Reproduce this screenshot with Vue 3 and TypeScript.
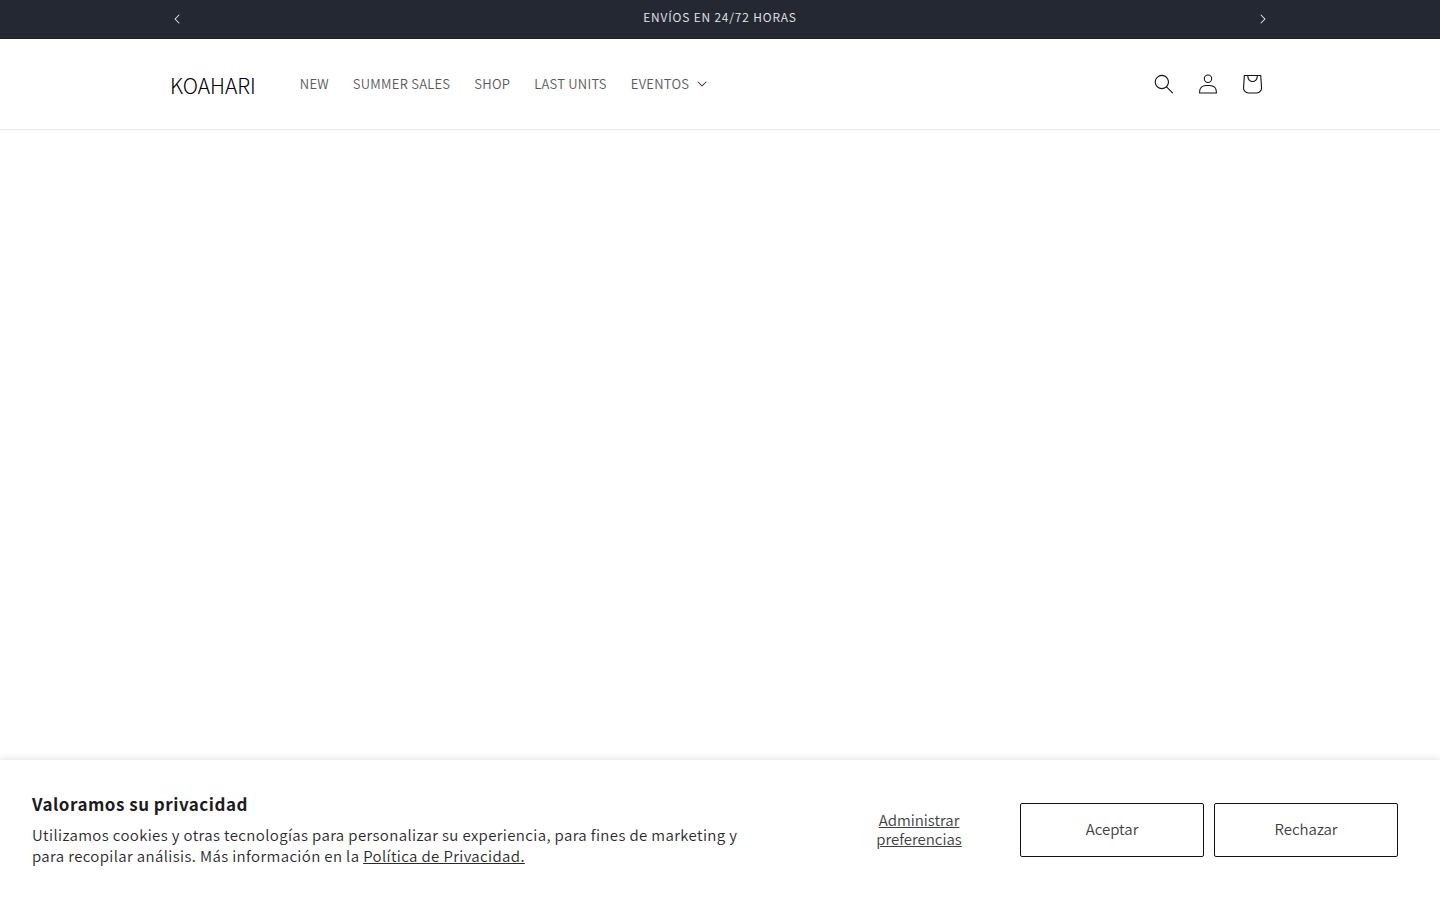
<script setup lang="ts">
import { ref } from 'vue'

interface NavItem {
  label: string
  href: string
}

const navItems: NavItem[] = [
  { label: 'NEW', href: '#new' },
  { label: 'SUMMER SALES', href: '#summer-sales' },
  { label: 'SHOP', href: '#shop' },
  { label: 'LAST UNITS', href: '#last-units' },
]

const showConsent = ref(true)
const eventsOpen = ref(false)
</script>

<template>
  <div class="page">
    <section class="announcement" aria-label="Anuncios">
      <div class="announcement-inner">
        <button class="slide-button" type="button" aria-label="Anuncio anterior">
          <svg class="chevron chevron-left" viewBox="0 0 10 6" aria-hidden="true">
            <path d="M9.354.646a.5.5 0 00-.708 0L5 4.293 1.354.646a.5.5 0 00-.708.708l4 4a.5.5 0 00.708 0l4-4a.5.5 0 000-.708z" />
          </svg>
        </button>
        <p class="announcement-text">ENVÍOS EN 24/72 HORAS</p>
        <button class="slide-button" type="button" aria-label="Anuncio siguiente">
          <svg class="chevron chevron-right" viewBox="0 0 10 6" aria-hidden="true">
            <path d="M9.354.646a.5.5 0 00-.708 0L5 4.293 1.354.646a.5.5 0 00-.708.708l4 4a.5.5 0 00.708 0l4-4a.5.5 0 000-.708z" />
          </svg>
        </button>
      </div>
    </section>

    <header class="header">
      <div class="header-inner">
        <a class="logo" href="#inicio">KOAHARI</a>
        <nav class="nav">
          <a v-for="item in navItems" :key="item.label" class="nav-link" :href="item.href">{{ item.label }}</a>
          <button class="nav-link nav-button" type="button" :aria-expanded="eventsOpen" @click="eventsOpen = !eventsOpen">
            EVENTOS
            <svg class="caret" viewBox="0 0 10 6" aria-hidden="true">
              <path d="M9.354.646a.5.5 0 00-.708 0L5 4.293 1.354.646a.5.5 0 00-.708.708l4 4a.5.5 0 00.708 0l4-4a.5.5 0 000-.708z" />
            </svg>
          </button>
        </nav>
        <div class="actions">
          <button class="icon-button" type="button" aria-label="Búsqueda">
            <svg class="icon" viewBox="0 0 18 19" aria-hidden="true">
              <path fill-rule="evenodd" clip-rule="evenodd" d="M11.03 11.68A5.784 5.784 0 112.85 3.5a5.784 5.784 0 018.18 8.18zm.26 1.12a6.78 6.78 0 11.72-.7l5.4 5.4a.5.5 0 11-.71.7l-5.41-5.4z" />
            </svg>
          </button>
          <a class="icon-button" href="#cuenta" aria-label="Iniciar sesión">
            <svg class="icon" viewBox="0 0 18 19" aria-hidden="true">
              <path fill-rule="evenodd" clip-rule="evenodd" d="M6 4.5a3 3 0 116 0 3 3 0 01-6 0zm3-4a4 4 0 100 8 4 4 0 000-8zm5.58 12.15c1.12.82 1.83 2.24 1.91 4.85H1.51c.08-2.6.79-4.03 1.9-4.85C4.66 11.75 6.5 11.5 9 11.5s4.35.26 5.58 1.15zM9 10.5c-2.5 0-4.65.24-6.17 1.35C1.27 12.98.5 14.93.5 18v.5h17V18c0-3.07-.77-5.02-2.33-6.15-1.52-1.1-3.67-1.35-6.17-1.35z" />
            </svg>
          </a>
          <a class="icon-button" href="#carrito" aria-label="Carrito">
            <svg class="icon-cart" viewBox="0 0 40 40" aria-hidden="true">
              <path fill-rule="evenodd" d="M15.75 11.8h-3.16l-.77 11.6a5 5 0 0 0 4.99 5.34h7.38a5 5 0 0 0 4.99-5.33L28.4 11.8zm0 1h-2.22l-.71 10.67a4 4 0 0 0 3.99 4.27h7.38a4 4 0 0 0 4-4.27l-.72-10.67h-2.22v.63a4.75 4.75 0 1 1-9.5 0zm8.5 0h-7.5v.63a3.75 3.75 0 1 0 7.5 0z" />
            </svg>
          </a>
        </div>
      </div>
    </header>

    <main class="content"></main>

    <section v-if="showConsent" class="consent" aria-labelledby="consent-title">
      <div class="consent-copy">
        <h2 id="consent-title" class="consent-title">Valoramos su privacidad</h2>
        <p class="consent-text">
          Utilizamos cookies y otras tecnologías para personalizar su experiencia, para fines de marketing y para recopilar análisis. Más información en la
          <a class="consent-link" href="#privacidad">Política de Privacidad.</a>
        </p>
      </div>
      <div class="consent-actions">
        <button class="preferences" type="button">Administrar preferencias</button>
        <button class="choice" type="button" @click="showConsent = false">Aceptar</button>
        <button class="choice" type="button" @click="showConsent = false">Rechazar</button>
      </div>
    </section>
  </div>
</template>

<style>
body {
  margin: 0;
  background: #fff;
}
</style>

<style scoped>
.page {
  display: flex;
  flex-direction: column;
  min-height: 100vh;
  font-family: "Noto Sans CJK SC", "Open Sans", sans-serif;
  font-weight: 350;
  color: #121212;
}

.page * {
  box-sizing: border-box;
}

button {
  margin: 0;
  padding: 0;
  border: 0;
  background: none;
  color: inherit;
  font: inherit;
  cursor: pointer;
}

a {
  color: inherit;
  text-decoration: none;
}

.announcement {
  background: #242833;
  border-bottom: 1px solid #20222c;
  color: #e9e9eb;
}

.announcement-inner,
.header-inner {
  display: flex;
  align-items: center;
  max-width: 1200px;
  margin: 0 auto;
  padding: 0 50px;
}

.announcement-inner {
  height: 38px;
  padding: 0 35px;
}

.announcement-text {
  flex: 1;
  margin: 0;
  padding-bottom: 4px;
  font-size: 12px;
  line-height: 20px;
  letter-spacing: 0.07em;
  text-align: center;
}

.slide-button {
  display: flex;
  align-items: center;
  justify-content: center;
  width: 44px;
  height: 38px;
}

.chevron {
  width: 10px;
  height: 6px;
  fill: #e9e9eb;
}

.chevron-left {
  transform: rotate(90deg);
}

.chevron-right {
  transform: rotate(-90deg);
}

.header {
  border-bottom: 1px solid #ebebeb;
}

.header-inner {
  height: 90px;
}

.logo {
  padding-top: 2px;
  font-size: 21px;
  line-height: 24px;
  font-weight: 300;
  color: #000;
}

.nav {
  display: flex;
  align-items: center;
  margin-left: 32px;
}

.nav-link {
  padding: 12px;
  font-size: 13px;
  line-height: 20px;
  letter-spacing: 0.02em;
  color: #595959;
  white-space: nowrap;
}

.nav-button {
  display: flex;
  align-items: center;
  gap: 8px;
}

.caret {
  width: 10px;
  height: 6px;
  fill: #333;
}

.actions {
  display: flex;
  margin-left: auto;
  margin-right: -4px;
}

.icon-button {
  display: flex;
  align-items: center;
  justify-content: center;
  width: 44px;
  height: 44px;
}

.icon {
  width: 20px;
  height: 20px;
  fill: #121212;
}

.icon-cart {
  width: 44px;
  height: 44px;
  fill: #121212;
}

.content {
  flex: 1;
}

.consent {
  display: flex;
  align-items: center;
  justify-content: space-between;
  position: sticky;
  bottom: 0;
  min-height: 140px;
  padding: 32px 42px 32px 32px;
  background: #fff;
  box-shadow: 0 0 8px rgba(0, 0, 0, 0.15);
}

.consent-copy {
  width: 720px;
  padding-bottom: 2px;
}

.consent-title {
  margin: 0 0 8px;
  font-size: 17px;
  line-height: 24px;
  font-weight: 700;
  letter-spacing: 0.03em;
  color: #1c1c1c;
}

.consent-text {
  margin: 0;
  font-size: 15px;
  line-height: 21px;
  letter-spacing: 0.025em;
  color: #2a2a2a;
}

.consent-link {
  text-decoration: underline;
}

.consent-actions {
  display: flex;
  align-items: center;
  gap: 10px;
}

.preferences,
.choice {
  width: 184px;
  min-height: 54px;
  padding-bottom: 3px;
  font-size: 15px;
  line-height: 19px;
  color: #404040;
}

.preferences {
  width: 182px;
  padding: 0 40px 2px;
  text-decoration: underline;
}

.choice {
  border: 1px solid #121212;
  border-radius: 2px;
}
</style>
